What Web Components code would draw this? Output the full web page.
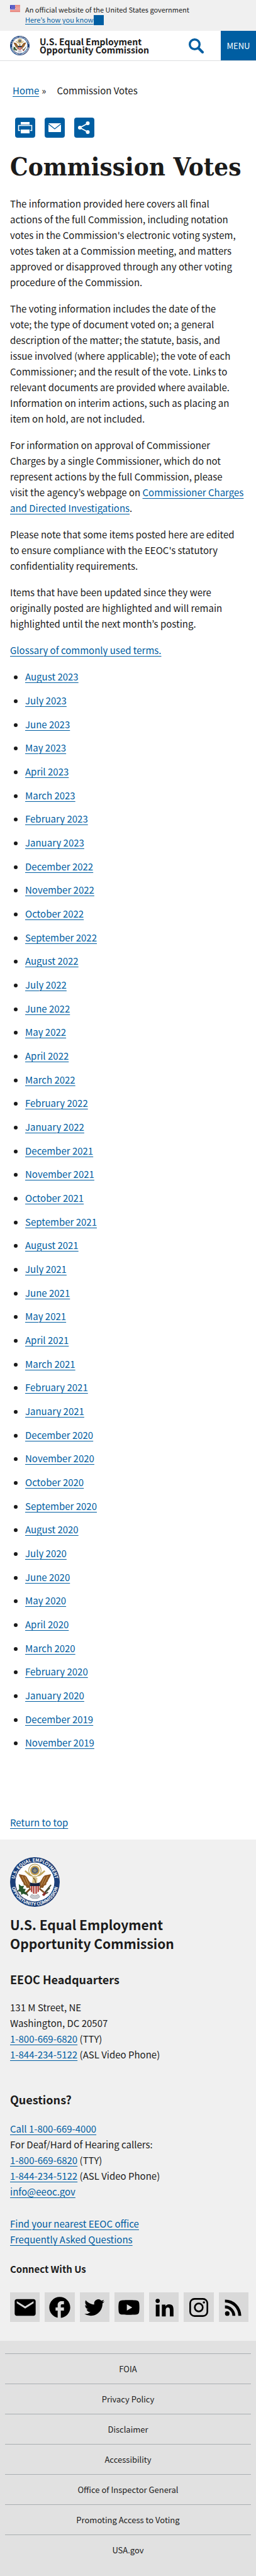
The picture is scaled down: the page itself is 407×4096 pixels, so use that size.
<!DOCTYPE html>
<html lang="en">
<head>
<meta charset="utf-8">
<meta name="viewport" content="width=device-width, initial-scale=1">
<title>Commission Votes | U.S. Equal Employment Opportunity Commission</title>
<style>
  body {
    margin: 0;
    background: #fff;
    color: #1b1b1b;
    font: 15px/25px "Noto Sans CJK KR", "Noto Sans", sans-serif;
    --link: #005ea2;
  }
</style>
</head>
<body>
<gov-banner></gov-banner>
<site-header></site-header>
<main>
  <bread-crumbs></bread-crumbs>
  <share-tools></share-tools>
  <page-article heading="Commission Votes"></page-article>
</main>
<site-footer></site-footer>
<footer-links></footer-links>

<script>
const base = `
  *, *::before, *::after { box-sizing: border-box; }
  :host { display: block; }
  a { color: var(--link); text-underline-offset: 3px; text-decoration-thickness: 1px; }
  p, h1, h2, h3, ul, address { margin: 0; padding: 0; font-style: normal; }
  svg { display: block; }
`;

function define(name, css, render) {
  customElements.define(name, class extends HTMLElement {
    constructor() {
      super();
      this.attachShadow({ mode: "open" });
    }
    connectedCallback() {
      this.shadowRoot.innerHTML = `<style>${base}${css}</style>${render(this)}`;
    }
  });
}

/* Round agency seal: lettered ring, glory, eagle and shield. */
define("agency-seal", `
  svg { width: 100%; height: auto; }
  text { font: bold 11px "Noto Sans CJK KR", sans-serif; fill: #fff; }
`, () => `
  <svg viewBox="0 0 120 120" role="img" aria-label="Agency seal">
    <defs>
      <path id="top" d="M11 60A49 49 0 0 1 109 60"/>
      <path id="low" d="M3 60A57 57 0 0 0 117 60"/>
    </defs>
    <circle cx="60" cy="60" r="60" fill="#1c3f78"/>
    <circle cx="60" cy="60" r="47" fill="#fff"/>
    <text text-anchor="middle"><textPath href="#top" startOffset="50%">U.S. EQUAL EMPLOYMENT</textPath></text>
    <text text-anchor="middle"><textPath href="#low" startOffset="50%">OPPORTUNITY COMMISSION</textPath></text>
    <circle cx="60" cy="32" r="15" fill="#fff" stroke="#b9a468" stroke-width="2"/>
    <circle cx="60" cy="32" r="11.500" fill="#c5a04d"/>
    <circle cx="60" cy="32" r="8" fill="#4c5a78"/>
    <path d="M60 26l2 4 4 1-3 3 1 4-4-2-4 2 1-4-3-3 4-1z" fill="#8b8a72"/>
    <path d="M36 33c6 4 8 9 16 12M84 33c-6 4-8 9-16 12" stroke="#c0a45c" stroke-width="4" fill="none"/>
    <path d="M54 65C44 60 43 48 36 44L21 41c2 8 6 11 8 17l3 4 1 5 5 2 2 5 6 0 2 4 6-3z" fill="#8a5422"/>
    <path d="M66 65c10-5 11-17 18-21l15-3c-2 8-6 11-8 17l-3 4-1 5-5 2-2 5-6 0-2 4-6-3z" fill="#8a5422"/>
    <path d="M29 46l10 20M36 47l9 21M91 46L81 66M84 47l-9 21" stroke="#bb8a4b" stroke-width="2"/>
    <path d="M53 63l2-12-3-4 5-2 4 3 5 2-1 13z" fill="#d8c48c"/>
    <path d="M56 50l4 4 2 8" fill="none" stroke="#6d4a20" stroke-width="2"/>
    <path d="M48 62q12 3 24 0l-1 19q-3 7-11 9-8-2-11-9z" fill="#e9d9d4"/>
    <path d="M52 70v14M57 70v18M63 70v18M68 70v14" stroke="#b0352f" stroke-width="3"/>
    <path d="M48 61q12 4 24 0v9H48z" fill="#17233f"/>
    <path d="M49 76l-11 11M71 76l11 9" stroke="#7c4d20" stroke-width="4"/>
    <path d="M21 65l6 5 7-1-3 7 7 1-3 6 6 3-2 5-7-3-5 3-1-7-8-2 4-5z" fill="#28572c"/>
    <path d="M39 86l4 7M84 85l15-18M82 88l14-14M80 91l12-6" stroke="#454b35" stroke-width="3"/>
    <path d="M77 91l7-8 3 5-5 6z" fill="#8c2f2a"/>
    <path d="M52 90l8 3 8-3 4 6-6 4H54l-6-4z" fill="#c6c9ce" stroke="#868b90"/>
  </svg>`);

define("gov-banner", `
  :host { background: #f0f0f0; }
  header { display: flex; gap: 8px; padding: 7px 16px 9px; font-size: 11px; line-height: 16px; }
  svg { width: 16px; height: 11px; margin-top: 1px; }
  button { display: flex; padding: 0; border: 0; background: none; color: var(--link);
    font: inherit; text-decoration: underline; text-underline-offset: 2px; }
  button::after { content: ""; width: 16px; height: 16px; background: var(--link); margin-top: 1px; }
`, () => `
  <header>
    <svg viewBox="0 0 16 11" aria-hidden="true">
      <path fill="#fff" d="M0 0h16v11H0z"/>
      <path d="M0 .5h16M0 2.500h16M0 4.500h16M0 6.500h16M0 8.500h16M0 10.500h16" stroke="#d93b2f"/>
      <path fill="#2b2fb5" d="M0 0h8v7H0z"/>
      <path d="M1 1.500h7M2 3.500h6M1 5.500h7" stroke="#fff" stroke-dasharray="1 1"/>
    </svg>
    <div>
      <p>An official website of the United States government</p>
      <button type="button">Here’s how you know</button>
    </div>
  </header>`);

define("site-header", `
  header { display: flex; align-items: center; padding-left: 16px; height: 48px; border-bottom: 1px solid #dcdee0; }
  agency-seal { width: 31px; }
  .name { flex: 1; margin-left: 16px; font-size: 14px; line-height: 13px; font-weight: bold; color: #1b1b1b; text-decoration: none; }
  button { border: 0; padding: 0; font: inherit; }
  .search { background: none; margin-right: 27px; }
  .search svg { width: 24px; height: 24px; }
  .menu { align-self: stretch; width: 56px; background: var(--link); color: #fff; font-size: 13px; }
`, () => `
  <header>
    <agency-seal></agency-seal>
    <a class="name" href="#">U.S. Equal Employment<br>Opportunity Commission</a>
    <button class="search" type="button" aria-label="Search">
      <svg viewBox="0 0 24 24" fill="none" stroke="#005ea2"><circle cx="9.500" cy="9.500" r="7.800" stroke-width="3.400"/><path d="M15.500 15.500l6.500 6.500" stroke-width="4" stroke-linecap="round"/></svg>
    </button>
    <button class="menu" type="button">MENU</button>
  </header>`);

define("bread-crumbs", `
  nav { display: flex; padding: 34px 20px 0; }
  .sep { margin: 0 17px 0 4px; }
`, () => `
  <nav aria-label="Breadcrumb"><a href="#">Home</a><span class="sep">»</span><span>Commission Votes</span></nav>`);

define("share-tools", `
  :host { padding: 31px 24px 0; }
  div { display: flex; gap: 15px; }
  a { width: 32px; height: 32px; border-radius: 4px; background: var(--link); }
`, () => `
  <div>
    <a href="#" aria-label="Print"><svg viewBox="0 0 32 32"><path fill="#fff" d="M9 7h14v4H9z"/><path d="M8 20.500H5.500v-8h21v8H24" fill="none" stroke="#fff" stroke-width="1.500"/><path fill="#fff" d="M9 19h14v6H9z"/></svg></a>
    <a href="#" aria-label="Email"><svg viewBox="0 0 32 32"><rect x="6" y="9" width="20" height="14" rx="1" fill="#fff"/><path d="M6 10l10 8 10-8" fill="none" stroke="#005ea2" stroke-width="1.300"/></svg></a>
    <a href="#" aria-label="Share"><svg viewBox="0 0 32 32" fill="#fff"><path d="M22 9L9 16l13 7" fill="none" stroke="#fff" stroke-width="1.800"/><circle cx="21.500" cy="9" r="3"/><circle cx="9" cy="16" r="3"/><circle cx="21.500" cy="23" r="3"/></svg></a>
  </div>`);

/* Monthly archive, newest first. */
const monthNames = ["January", "February", "March", "April", "May", "June", "July",
  "August", "September", "October", "November", "December"];
function archive() {
  const out = [];
  for (let y = 2023, m = 7; y > 2019 || m >= 10; m--) {
    if (m < 0) { m = 11; y--; }
    out.push(`${monthNames[m]} ${y}`);
    if (y === 2019 && m === 10) break;
  }
  return out;
}

define("vote-archive", `
  ul { display: block; padding-left: 24px; list-style: disc; }
  li { margin-bottom: 13px; }
  li:nth-child(3n) { margin-bottom: 12px; }
`, () => `<ul>${archive().map(t => `<li><a href="#">${t}</a></li>`).join("")}</ul>`);

define("page-article", `
  :host { padding: 19px 16px 0; }
  h1 { font: bold 40px/54px "DejaVu Serif Condensed", "DejaVu Serif", serif; margin-bottom: 19px; white-space: nowrap; }
  p { margin-bottom: 17px; }
  .prose { padding-right: 12px; }
  .top { padding: 89px 0 15px; margin: 0; }
`, host => `
  <h1>${host.getAttribute("heading")}</h1>
  <p class="prose">The information provided here covers all final actions of the full Commission, including notation votes in the Commission's electronic voting system, votes taken at a Commission meeting, and matters approved or disapproved through any other voting procedure of the Commission.</p>
  <p class="prose">The voting information includes the date of the vote; the type of document voted on; a general description of the matter; the statute, basis, and issue involved (where applicable); the vote of each Commissioner; and the result of the vote. Links to relevant documents are provided where available. Information on interim actions, such as placing an item on hold, are not included.</p>
  <p>For information on approval of Commissioner Charges by a single Commissioner, which do not represent actions by the full Commission, please visit&nbsp;the agency’s webpage on <a href="#">Commissioner Charges and Directed Investigations</a>.</p>
  <p class="prose">Please note that some items posted here are edited to ensure compliance with the EEOC's statutory confidentiality requirements.</p>
  <p class="prose">Items that have been updated since they were originally posted are highlighted and will remain highlighted until the next month’s posting.</p>
  <p><a href="#">Glossary of commonly used terms.</a></p>
  <vote-archive></vote-archive>
  <p class="top"><a href="#">Return to top</a></p>`);

/* One square social button; the glyph is slotted in. */
define("social-link", `
  a { display: flex; aspect-ratio: 1; background: #d9d9d9; align-items: center; justify-content: center; }
  ::slotted(svg) { width: 40px; height: 40px; display: block; fill: #000; }
`, host => `<a href="#" aria-label="${host.getAttribute("label")}"><slot></slot></a>`);

const social = [
  ["Email", `<path d="M20 4H4c-1.100 0-1.990.9-1.990 2L2 18c0 1.100.9 2 2 2h16c1.100 0 2-.9 2-2V6c0-1.100-.9-2-2-2zm0 4l-8 5-8-5V6l8 5 8-5v2z"/>`],
  ["Facebook", `<path d="M22 12c0-5.520-4.480-10-10-10S2 6.480 2 12c0 4.840 3.440 8.870 8 9.800V15H8v-3h2V9.500C10 7.570 11.570 6 13.500 6H16v3h-2c-.55 0-1 .45-1 1v2h3v3h-3v6.950c5.050-.5 9-4.760 9-9.950z"/>`],
  ["Twitter", `<path transform="translate(2.500 2.500) scale(.8)" d="M23.953 4.570a10 10 0 0 1-2.825.775 4.958 4.958 0 0 0 2.163-2.723c-.951.555-2.005.959-3.127 1.184a4.920 4.920 0 0 0-8.384 4.482C7.690 8.095 4.067 6.130 1.640 3.162a4.822 4.822 0 0 0-.666 2.475c0 1.710.87 3.213 2.188 4.096a4.904 4.904 0 0 1-2.228-.616v.06a4.923 4.923 0 0 0 3.946 4.827 4.996 4.996 0 0 1-2.212.085 4.936 4.936 0 0 0 4.604 3.417 9.867 9.867 0 0 1-6.102 2.105c-.39 0-.779-.023-1.170-.067a13.995 13.995 0 0 0 7.557 2.209c9.053 0 13.998-7.496 13.998-13.985 0-.21 0-.42-.015-.63A9.935 9.935 0 0 0 24 4.590z"/>`],
  ["YouTube", `<path d="M21.600 7.200a2.500 2.500 0 0 0-1.800-1.800C18.200 5 12 5 12 5s-6.200 0-7.800.4A2.500 2.500 0 0 0 2.400 7.200C2 8.800 2 12 2 12s0 3.200.4 4.800a2.500 2.500 0 0 0 1.800 1.800C5.800 19 12 19 12 19s6.200 0 7.800-.4a2.500 2.500 0 0 0 1.800-1.800c.4-1.600.4-4.800.4-4.800s0-3.200-.4-4.800zM10 15V9l5.200 3z"/>`],
  ["LinkedIn", `<path d="M4 9.300h3.600v11.200H4zM5.800 3.700a2.050 2.050 0 1 1 0 4.100 2.050 2.050 0 0 1 0-4.100M9.800 9.300h3.400v1.500h.1c.5-.9 1.600-1.800 3.400-1.800 3.600 0 4.200 2.300 4.200 5.400v6.100h-3.500V15c0-1.300 0-3-1.800-3s-2.100 1.400-2.100 2.900v5.600H9.800z"/>`],
  ["Instagram", `<path fill-rule="evenodd" d="M8 3h8a5 5 0 0 1 5 5v8a5 5 0 0 1-5 5H8a5 5 0 0 1-5-5V8a5 5 0 0 1 5-5zm0 1.600A3.400 3.400 0 0 0 4.600 8v8A3.400 3.400 0 0 0 8 19.400h8a3.400 3.400 0 0 0 3.400-3.400V8A3.400 3.400 0 0 0 16 4.600zM12 7.400a4.600 4.600 0 1 1 0 9.200 4.600 4.600 0 0 1 0-9.200zM12 9a3 3 0 1 0 0 6 3 3 0 0 0 0-6zM16.900 6.100a1.100 1.100 0 1 1 0 2.200 1.100 1.100 0 0 1 0-2.200z"/>`],
  ["RSS", `<path d="M6.180 15.640a2.180 2.180 0 1 1 0 4.360 2.180 2.180 0 0 1 0-4.360M4 4.440A15.560 15.560 0 0 1 19.560 20h-2.830A12.730 12.730 0 0 0 4 7.270zm0 5.660a9.900 9.900 0 0 1 9.900 9.900h-2.830A7.070 7.070 0 0 0 4 12.930z"/>`]
];

define("site-footer", `
  :host { background: #f0f0f0; }
  footer { padding: 28px 12px 30px 16px; }
  agency-seal { width: 79px; margin-bottom: 13px; }
  h2 { font-size: 21px; line-height: 30px; margin-bottom: 30px; }
  h3 { font-size: 18px; line-height: 25px; margin-bottom: 19px; }
  .q { margin: 47px 0 21px; }
  .more { margin-top: 26px; }
  .connect { font-size: 15px; margin: 22px 0 25px; }
  .social { display: grid; grid-template-columns: repeat(7, 1fr); gap: 8px; }
`, () => `
  <footer>
    <agency-seal></agency-seal>
    <h2>U.S. Equal Employment<br>Opportunity Commission</h2>
    <h3>EEOC Headquarters</h3>
    <address>131 M Street, NE<br>Washington, DC 20507<br><a href="#">1-800-669-6820</a> (TTY)<br><a href="#">1-844-234-5122</a> (ASL Video Phone)</address>
    <h3 class="q">Questions?</h3>
    <p><a href="#">Call 1-800-669-4000</a><br>For Deaf/Hard of Hearing callers:<br><a href="#">1-800-669-6820</a> (TTY)<br><a href="#">1-844-234-5122</a> (ASL Video Phone)<br><a href="#">info@eeoc.gov</a></p>
    <p class="more"><a href="#">Find your nearest EEOC office</a><br><a href="#">Frequently Asked Questions</a></p>
    <h3 class="connect">Connect With Us</h3>
    <div class="social">${social.map(([label, art]) =>
      `<social-link label="${label}"><svg viewBox="0 0 24 24" aria-hidden="true">${art}</svg></social-link>`).join("")}</div>
  </footer>`);

define("footer-links", `
  :host { background: #e1e1e1; padding: 20px 8px 19px; }
  ul { list-style: none; font-size: 13px; line-height: 47px; text-align: center; }
  li { border-top: 1px solid #a9aeb1; }
  a { color: #1b1b1b; text-decoration: none; }
`, () => `<ul>${["FOIA", "Privacy Policy", "Disclaimer", "Accessibility", "Office of Inspector General",
    "Promoting Access to Voting", "USA.gov"].map(t => `<li><a href="#">${t}</a></li>`).join("")}</ul>`);
</script>
</body>
</html>
